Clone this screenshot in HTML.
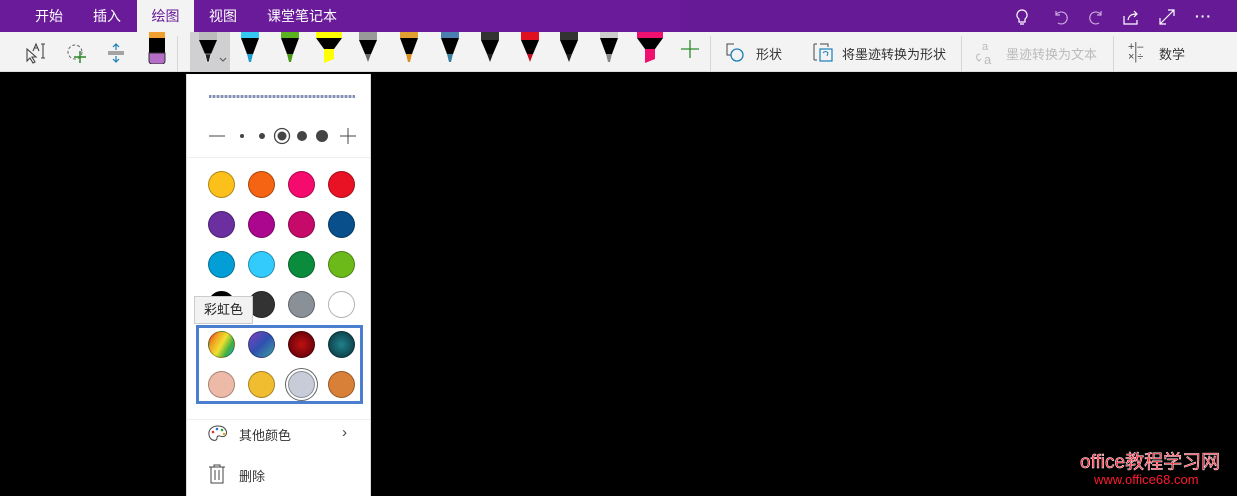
<!DOCTYPE html>
<html><head><meta charset="utf-8"><style>
*{margin:0;padding:0;box-sizing:border-box}
body{width:1237px;height:496px;background:#000;position:relative;overflow:hidden;font-family:"Liberation Sans","Noto Sans CJK SC",sans-serif}
.top{position:absolute;left:0;top:0;width:1237px;height:32px;background:#6a1b9a}
.top .r{position:absolute;left:680px;top:0;width:557px;height:32px;background:#661a96}
.tab{position:absolute;top:0;height:32px;line-height:32px;color:#fff;font-size:14px}
.tb{position:absolute;left:0;top:32px;width:1237px;height:40px;background:#f3f3f3;border-bottom:1px solid #ddd}
.a{position:absolute}
.sep{position:absolute;top:36px;width:1px;height:36px;background:#d6d6d6}
.lbl{position:absolute;top:44px;font-size:13px;color:#333}
.panel{position:absolute;left:186px;top:74px;width:185px;height:422px;background:#fff;border-left:1px solid #ddd;border-right:1px solid #ddd}
.c{position:absolute;width:27px;height:27px;border-radius:50%;border:1px solid rgba(0,0,0,.3)}
.ic{position:absolute;top:8px}
</style></head><body>
<div class="top"><div class="r"></div>
<div class="tab" style="left:35px">开始</div>
<div class="tab" style="left:93px">插入</div>
<div class="tab" style="left:137px;width:57px;background:#f3f3f3;color:#6a1b9a;text-align:center">绘图</div>
<div class="tab" style="left:209px">视图</div>
<div class="tab" style="left:267px">课堂笔记本</div>
<svg class="ic" style="left:1013px" width="18" height="18" viewBox="0 0 18 18" fill="none" stroke="#fff" stroke-width="1.2"><path d="M9 2a5 5 0 0 0-3 9v3h6v-3a5 5 0 0 0-3-9zM7 16h4"/></svg>
<svg class="ic" style="left:1052px" width="18" height="18" viewBox="0 0 18 18" fill="none" stroke="#c9a8dc" stroke-width="1.2"><path d="M4 3v4h4M4 7a6 6 0 1 1 2 8"/></svg>
<svg class="ic" style="left:1087px" width="18" height="18" viewBox="0 0 18 18" fill="none" stroke="#c9a8dc" stroke-width="1.2"><path d="M14 3v4h-4M14 7a6 6 0 1 0-2 8"/></svg>
<svg class="ic" style="left:1122px" width="18" height="18" viewBox="0 0 18 18" fill="none" stroke="#fff" stroke-width="1.2"><path d="M2 8v8h13v-4M6 12c1-5 4-6 9-6M12 3l3 3-3 3"/></svg>
<svg class="ic" style="left:1158px" width="18" height="18" viewBox="0 0 18 18" fill="none" stroke="#fff" stroke-width="1.2"><path d="M2 16L16 2M10 2h6v6M2 10v6h6"/></svg>
<div class="tab" style="left:1195px;font-weight:bold;letter-spacing:1px">···</div>
</div>
<div class="tb"></div>
<svg class="a" style="left:24px;top:42px" width="24" height="22" viewBox="0 0 24 22" fill="none" stroke="#444" stroke-width="1.1"><path d="M3 7l0 12 3-3 3 5 2-1-3-5h4z"/><path d="M9 9l3-7 3 7M10 6h4M17 2h4M19 2v14M17 16h4"/></svg>
<svg class="a" style="left:65px;top:42px" width="24" height="22" viewBox="0 0 24 22" fill="none"><circle cx="10" cy="10" r="7" stroke="#666" stroke-dasharray="3 2"/><path d="M15 9v12M9 15h12" stroke="#2a8a2a" stroke-width="1.5"/></svg>
<svg class="a" style="left:105px;top:42px" width="22" height="22" viewBox="0 0 22 22" fill="none"><path d="M3 10h16M3 12h16" stroke="#555"/><path d="M11 2v6M8 5l3-3 3 3M11 14v6M8 17l3 3 3-3" stroke="#1a7fb8" stroke-width="1.2"/></svg>
<svg class="a" style="left:147px;top:32px" width="20" height="32" viewBox="0 0 20 32"><rect x="2" y="0" width="16" height="6" fill="#f0a030"/><rect x="2" y="6" width="16" height="15" fill="#000"/><path d="M2 21h16v8a3 3 0 0 1-3 3H5a3 3 0 0 1-3-3z" fill="#b46ec8" stroke="#333"/></svg>
<div class="sep" style="left:177px"></div>
<div class="a" style="left:190px;top:32px;width:40px;height:40px;background:#d0d0d2"></div>
<svg class="a" style="left:0;top:32px" width="710" height="32" viewBox="0 0 710 32">
<g transform="translate(208,0)"><rect x="-9" y="0" width="18" height="8" fill="#bbb"/><path d="M-9 8h18l-6 14h-6z" fill="#000"/><path d="M-3 22h6l-2 8h-2z" fill="#222" stroke="#fff" stroke-width=".6"/></g>
<path d="M220 26l3 3 3-3" stroke="#555" fill="none"/>
<g transform="translate(250,0)"><rect x="-9" y="0" width="18" height="6" fill="#33c7f2"/><path d="M-9 6h18l-6 16h-6z" fill="#000"/><path d="M-3 22h6l-2 8h-2z" fill="#1a9ecf"/></g>
<g transform="translate(290,0)"><rect x="-9" y="0" width="18" height="6" fill="#5bb320"/><path d="M-9 6h18l-6 16h-6z" fill="#000"/><path d="M-3 22h6l-2 8h-2z" fill="#4a9a18"/></g>
<g transform="translate(329,0)"><rect x="-13" y="0" width="26" height="6" fill="#ffff00"/><path d="M-13 6h26l-8 11h-10z" fill="#000"/><path d="M-5 17h10v10l-10 4z" fill="#ffff00"/></g>
<g transform="translate(368,0)"><rect x="-9" y="0" width="18" height="8" fill="#999"/><path d="M-9 8h18l-6 14h-6z" fill="#000"/><path d="M-3 22h6l-3 8z" fill="#666"/></g>
<g transform="translate(409,0)"><rect x="-9" y="0" width="18" height="6" fill="#e0a030"/><path d="M-9 6h18l-6 16h-6z" fill="#000"/><path d="M-3 22h6l-2 8h-2z" fill="#d89020"/></g>
<g transform="translate(450,0)"><rect x="-9" y="0" width="18" height="6" fill="#4a7fb0"/><path d="M-9 6h18l-6 16h-6z" fill="#000"/><path d="M-3 22h6l-2 8h-2z" fill="#3a80a0"/></g>
<g transform="translate(490,0)"><rect x="-9" y="0" width="18" height="8" fill="#333"/><path d="M-9 8h18l-6 14h-6z" fill="#000"/><path d="M-3 22h6l-3 8z" fill="#222"/></g>
<g transform="translate(530,0)"><rect x="-9" y="0" width="18" height="8" fill="#e01020"/><path d="M-9 8h18l-6 14h-6z" fill="#000"/><path d="M-3 22h6l-3 8z" fill="#c01020"/></g>
<g transform="translate(569,0)"><rect x="-9" y="0" width="18" height="8" fill="#333"/><path d="M-9 8h18l-6 14h-6z" fill="#000"/><path d="M-3 22h6l-3 8z" fill="#222"/></g>
<g transform="translate(609,0)"><rect x="-9" y="0" width="18" height="6" fill="#ccc"/><path d="M-9 6h18l-6 16h-6z" fill="#000"/><path d="M-3 22h6l-2 8h-2z" fill="#888"/></g>
<g transform="translate(650,0)"><rect x="-13" y="0" width="26" height="6" fill="#f01070"/><path d="M-13 6h26l-8 11h-10z" fill="#000"/><path d="M-5 17h10v10l-10 4z" fill="#f01070"/></g>
<path d="M690 8v18M681 17h18" stroke="#2a8a2a" stroke-width="1.3"/>
</svg>
<div class="sep" style="left:710px"></div>
<svg class="a" style="left:725px;top:42px" width="22" height="22" viewBox="0 0 22 22" fill="none"><path d="M9 2H2v11h4" stroke="#444"/><circle cx="12" cy="13" r="6" stroke="#1a7fb8" stroke-width="1.3"/></svg>
<div class="lbl" style="left:756px">形状</div>
<svg class="a" style="left:812px;top:42px" width="22" height="22" viewBox="0 0 22 22" fill="none"><path d="M2 2v16M5 2H2M5 18H2M8 2h8v3" stroke="#444"/><rect x="8" y="7" width="12" height="12" stroke="#1a7fb8" stroke-width="1.2"/><path d="M11 11a3 3 0 0 1 5 0l-1 3" stroke="#1a7fb8"/></svg>
<div class="lbl" style="left:842px">将墨迹转换为形状</div>
<div class="sep" style="left:961px"></div>
<svg class="a" style="left:973px;top:40px" width="24" height="26" viewBox="0 0 24 26" fill="none" stroke="#bbb"><path d="M7 14c-3 0-4 2-3 5l2 2M4 19l2 2 2-2"/><text x="9" y="10" font-size="11" fill="#bbb" stroke="none" font-family="Liberation Sans">a</text><text x="11" y="24" font-size="13" fill="#bbb" stroke="none" font-family="Liberation Sans">a</text></svg>
<div class="lbl" style="left:1006px;color:#bbb">墨迹转换为文本</div>
<div class="sep" style="left:1113px"></div>
<div class="a" style="left:1128px;top:42px;font-size:11px;color:#444;line-height:10px">+|–<br>×|÷</div>
<div class="lbl" style="left:1159px">数学</div>
<div class="panel">
<div class="a" style="left:22px;top:21px;width:146px;height:3px;background:repeating-linear-gradient(90deg,#8090b0 0 2px,#c8cee0 2px 4px)"></div>
<svg class="a" style="left:18px;top:50px" width="152" height="24" viewBox="0 0 152 24"><path d="M4 12h16M135 12h16M143 4v16" stroke="#444"/><circle cx="37" cy="12" r="2" fill="#444"/><circle cx="57" cy="12" r="3" fill="#444"/><circle cx="77" cy="12" r="7.5" fill="none" stroke="#444" stroke-width="1.3"/><circle cx="77" cy="12" r="4.5" fill="#444"/><circle cx="97" cy="12" r="5" fill="#444"/><circle cx="117" cy="12" r="6" fill="#444"/></svg>
<div class="a" style="left:0;top:83px;width:183px;height:1px;background:#eee"></div>
<div class="c" style="left:21px;top:97px;background:#fbc11a"></div>
<div class="c" style="left:61px;top:97px;background:#f46412"></div>
<div class="c" style="left:101px;top:97px;background:#f50a6e"></div>
<div class="c" style="left:141px;top:97px;background:#e81224"></div>
<div class="c" style="left:21px;top:137px;background:#6b2fa0"></div>
<div class="c" style="left:61px;top:137px;background:#ab078e"></div>
<div class="c" style="left:101px;top:137px;background:#c60a6a"></div>
<div class="c" style="left:141px;top:137px;background:#084f8c"></div>
<div class="c" style="left:21px;top:177px;background:#039ed6"></div>
<div class="c" style="left:61px;top:177px;background:#33cbfb"></div>
<div class="c" style="left:101px;top:177px;background:#0a8c3c"></div>
<div class="c" style="left:141px;top:177px;background:#6bba1a"></div>
<div class="c" style="left:21px;top:217px;background:#000"></div>
<div class="c" style="left:61px;top:217px;background:#333"></div>
<div class="c" style="left:101px;top:217px;background:#8a9098"></div>
<div class="c" style="left:141px;top:217px;background:#fff"></div>
<div class="a" style="left:7px;top:222px;width:59px;height:28px;background:#f2f2f2;border:1px solid #ccc;font-size:13px;line-height:26px;text-align:center;color:#222">彩虹色</div>
<div class="a" style="left:9px;top:251px;width:167px;height:79px;border:3px solid #4a7fd0"></div>
<div class="c" style="left:21px;top:257px;background:linear-gradient(120deg,#e03020,#f0a020,#f0e030,#40b040,#20a0e0)"></div>
<div class="c" style="left:61px;top:257px;background:linear-gradient(135deg,#8040c0,#3050b0,#40a0a0)"></div>
<div class="c" style="left:101px;top:257px;background:radial-gradient(#c01010,#500008)"></div>
<div class="c" style="left:141px;top:257px;background:radial-gradient(#20808a,#083038)"></div>
<div class="c" style="left:21px;top:297px;background:#eebaa8"></div>
<div class="c" style="left:61px;top:297px;background:#f0bc30"></div>
<div class="c" style="left:101px;top:297px;background:#c8ccd8;box-shadow:0 0 0 2px #fff,0 0 0 3px #666"></div>
<div class="c" style="left:141px;top:297px;background:#d88038"></div>
<div class="a" style="left:0;top:345px;width:183px;height:1px;background:#eee"></div>
<svg class="a" style="left:20px;top:350px" width="22" height="20" viewBox="0 0 22 20" fill="none" stroke="#444"><path d="M11 2C5 2 1 6 2 11s5 6 7 5 0-3 2-4 4 2 7 0 2-10-7-10z"/><circle cx="6" cy="8" r="1.3" fill="#e03030" stroke="none"/><circle cx="10" cy="5" r="1.3" fill="#3070d0" stroke="none"/><circle cx="15" cy="6" r="1.3" fill="#30a040" stroke="none"/><circle cx="17" cy="10" r="1.3" fill="#f0a020" stroke="none"/></svg>
<div class="a" style="left:52px;top:351px;font-size:13px;color:#333">其他颜色</div>
<div class="a" style="left:155px;top:350px;font-size:15px;color:#444">›</div>
<svg class="a" style="left:21px;top:390px" width="18" height="20" viewBox="0 0 18 20" fill="none" stroke="#444"><path d="M1 3h16M6 3V1h6v2M3 3v16h12V3M7 6v10M11 6v10"/></svg>
<div class="a" style="left:52px;top:392px;font-size:13px;color:#333">删除</div>
</div>
<div class="a" style="left:1080px;top:447px;font-size:19px;color:#ff1a30;-webkit-text-stroke:0.5px #fff">office教程学习网</div>
<div class="a" style="left:1094px;top:472px;font-size:13px;color:#ff1a30">www.office68.com</div>
</body></html>
